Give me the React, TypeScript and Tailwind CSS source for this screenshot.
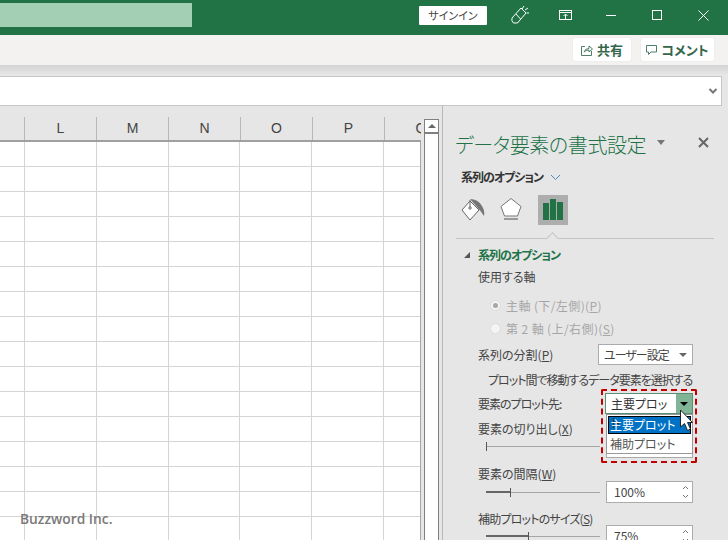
const font = "font-['Noto_Sans_CJK_JP','Liberation_Sans',sans-serif] [font-feature-settings:'palt']";

const columns = [
  { label: "", width: "w-[25px]" },
  { label: "L", width: "w-[72px]" },
  { label: "M", width: "w-[72px]" },
  { label: "N", width: "w-[72px]" },
  { label: "O", width: "w-[72px]" },
  { label: "P", width: "w-[72px]" },
  { label: "Q", width: "w-[36px]" },
];

const rows = Array.from({ length: 16 });

function TitleBar() {
  return (
    <div className="h-[35px] shrink-0 bg-[#217346] flex items-center">
      <div className="w-[192px] h-[24px] mb-[5px] bg-[#a3cfb5]" />
      <div className="flex-1" />
      <div className="w-[68px] h-[19px] mb-[5px] mr-[20px] bg-white rounded-[1px] flex items-center justify-center text-[11px] text-[#444]">
        サインイン
      </div>
      <svg width="24" height="24" viewBox="0 0 24 24" fill="none" stroke="white" strokeWidth="1" className="mb-[5px] mr-[26px]">
        <path d="M5 15 L14 5 L19 10 L10.5 20 L6.5 20 Q4 18 5 15 Z" />
        <path d="M9 11 L13.5 16" />
        <path d="M15 6 L17 3 M18 7 L21 5 M19.5 10 L22 10" />
      </svg>
      <svg width="16" height="14" viewBox="0 0 16 14" fill="none" stroke="white" strokeWidth="1" className="mb-[5px] mr-[33px]">
        <rect x="2.5" y="2.5" width="12" height="9" />
        <path d="M2.5 4.5 H14.5 M8.5 11 V6.5 M6.5 8 L8.5 6 L10.5 8" />
      </svg>
      <div className="w-[10px] h-px bg-white mb-[5px] mr-[36px]" />
      <div className="w-[10px] h-[10px] border border-white mb-[5px] mr-[36px]" />
      <svg width="11" height="11" viewBox="0 0 11 11" stroke="white" strokeWidth="1" className="mb-[5px] mr-[19px]">
        <path d="M0.5 0.5 L10.5 10.5 M10.5 0.5 L0.5 10.5" />
      </svg>
    </div>
  );
}

function RibbonStrip() {
  return (
    <div className="h-[30px] shrink-0 bg-[#f3f2f1] flex items-center justify-end gap-[10px] pr-[14px] pb-[1px]">
      <div className="w-[58px] h-[23px] bg-white rounded-[2px] shadow-[0_0_1px_#ccc] flex items-center justify-center gap-[4px] text-[13px] font-bold text-[#33664c]">
        <svg width="12" height="12" viewBox="0 0 12 12" fill="none" stroke="#4f7f68" strokeWidth="1">
          <path d="M4 2.5 H0.5 V11.5 H10.5 V7" />
          <path d="M3 8 Q4 4.5 8 4.5 V2 L11.5 5 L8 8 V6 Q5 6 3 8 Z" />
        </svg>
        共有
      </div>
      <div className="w-[73px] h-[23px] bg-white rounded-[2px] shadow-[0_0_1px_#ccc] flex items-center justify-center gap-[3px] text-[13px] font-bold text-[#33664c]">
        <svg width="12" height="12" viewBox="0 0 12 12" fill="none" stroke="#4f7f68" strokeWidth="1">
          <path d="M0.5 1.5 H10.5 V8 H5 L2.5 10.5 V8 H0.5 Z" />
        </svg>
        コメント
      </div>
    </div>
  );
}

function FormulaBar() {
  return (
    <div className="h-[41px] shrink-0 bg-[#e6e6e6] flex flex-col">
      <div className="h-[11px] bg-gradient-to-b from-[#d4d4d4] to-[#e8e8e8]" />
      <div className="h-[30px] mr-[6px] bg-white border-y border-r border-[#c6c6c6] flex items-center justify-end pr-[3px]">
        <svg width="10" height="7" viewBox="0 0 10 7" fill="none" stroke="#777" strokeWidth="2">
          <path d="M1.5 1 L5 4.5 L8.5 1" />
        </svg>
      </div>
    </div>
  );
}

function Sheet() {
  return (
    <div className="w-[421px] pt-[11px] shrink-0">
      <div className="h-[25px] flex border-b-2 border-[#a0a0a0]">
        {columns.map((c, i) => (
          <div
            key={i}
            className={`${c.width} overflow-hidden text-[14px] text-[#444] font-['Liberation_Sans',sans-serif] ${i < 6 ? "border-r border-[#b8b8b8]" : ""}`}
          >
            <div className={`h-full flex items-center justify-center ${i === 6 ? "w-[72px]" : "w-full"}`}>{c.label}</div>
          </div>
        ))}
      </div>
      <div className="bg-white border-r border-[#a6a6a6]">
        {rows.map((_, r) => (
          <div key={r} className="h-[25px] flex border-b border-[#d4d4d4]">
            {columns.map((c, i) => (
              <div key={i} className={`${c.width} ${i < 6 ? "border-r border-[#d4d4d4]" : ""}`} />
            ))}
          </div>
        ))}
      </div>
    </div>
  );
}

function Scrollbar() {
  return (
    <div className="w-[15px] ml-[3px] mt-[13px] shrink-0 bg-white border-x border-[#808080] flex flex-col">
      <div className="h-[15px] border-t border-b-2 border-[#808080] flex items-center justify-center">
        <div className="w-0 h-0 border-x-[4px] border-x-transparent border-b-[4px] border-b-[#666]" />
      </div>
    </div>
  );
}

function Label({ children, className = "" }: { children: React.ReactNode; className?: string }) {
  return <div className={`text-[12px] leading-none text-[#444] ${className}`}>{children}</div>;
}

function Slider({ fill }: { fill: number }) {
  return (
    <div className="w-[114px] h-[9px] shrink-0 relative flex items-center">
      <div className="w-full h-px bg-[#a6a6a6]" />
      <div className="absolute left-0 h-[2px] bg-[#666]" style={{ width: fill }} />
      <div className="absolute w-px h-[9px] bg-[#555]" style={{ left: fill }} />
    </div>
  );
}

function Spin({ value }: { value: string }) {
  return (
    <div className="w-[87px] h-[22px] ml-[6px] shrink-0 bg-white border border-[#ababab] flex items-center justify-between pl-[7px] pr-[3px] text-[12px] text-[#444]">
      {value}
      <svg width="7" height="14" viewBox="0 0 7 14" fill="none" stroke="#777" strokeWidth="1" className="ml-auto">
        <path d="M1 4 L3.5 1.5 L6 4 M1 10 L3.5 12.5 L6 10" />
      </svg>
    </div>
  );
}

function Radio({ checked, children }: { checked?: boolean; children: React.ReactNode }) {
  return (
    <div className="h-[23px] flex items-center gap-[5px] pl-[12px] text-[12px] tracking-[0.4px] text-[#a6a6a6]">
      <div className="w-[11px] h-[11px] rounded-full bg-[#f4f4f4] border border-[#dcdcdc] flex items-center justify-center">
        {checked && <div className="w-[5px] h-[5px] rounded-full bg-[#a6a6a6]" />}
      </div>
      <span>{children}</span>
    </div>
  );
}

function FormatPane() {
  return (
    <div className="flex-1 ml-[3px] border-l border-[#b8b8b8] pl-[13px] pr-[14px] pt-[24px] overflow-hidden">
      <div className="h-[30px] flex items-center relative">
        <span className="text-[20px] leading-none tracking-[-0.4px] ml-[-1px] text-[#217346] font-light whitespace-nowrap">データ要素の書式設定</span>
        <div className="ml-[11px] mb-[6px] w-0 h-0 border-x-[4px] border-x-transparent border-t-[5px] border-t-[#767676]" />
        <svg width="11" height="11" viewBox="0 0 11 11" stroke="#666" strokeWidth="2" className="ml-auto mb-[5px] mr-[5px]">
          <path d="M1 1 L10 10 M10 1 L1 10" />
        </svg>
      </div>
      <div className="h-[26px] mt-[4px] pl-[5px] flex items-center gap-[7px] text-[12px] tracking-[-1px] font-bold text-[#333]">
        系列のオプション
        <svg width="11" height="7" viewBox="0 0 11 7" fill="none" stroke="#4a8ac4" strokeWidth="1">
          <path d="M1 1 L5.5 5.5 L10 1" />
        </svg>
      </div>
      <div className="h-[30px] mt-[5px] flex items-center">
        <svg width="26" height="26" viewBox="0 0 26 26" className="ml-[4px]">
          <path d="M10 2 Q18 2 22 9 Q25 14 24 19 Q21 14 17 10 Z" fill="#767676" />
          <path d="M10 4 L19 13 L10 23 L2 13 Z" fill="white" stroke="#666" strokeWidth="1" />
          <path d="M10 3 V10" stroke="#666" strokeWidth="1" />
          <circle cx="10" cy="11" r="1.2" fill="none" stroke="#666" strokeWidth="1" />
        </svg>
        <svg width="24" height="26" viewBox="0 0 24 26" className="ml-[13px]">
          <path d="M12 1.5 L22 9.5 L18.5 19 H5.5 L2 9.5 Z" fill="white" stroke="#777" strokeWidth="1" />
          <path d="M5 22 H19" stroke="#999" strokeWidth="2" />
        </svg>
        <div className="w-[30px] h-[30px] ml-[15px] bg-[#adadad] flex items-end justify-center gap-px pb-[5px]">
          <div className="w-[6px] h-[17px] bg-[#217346]" />
          <div className="w-[6px] h-[21px] bg-[#217346]" />
          <div className="w-[6px] h-[18px] bg-[#217346]" />
        </div>
      </div>
      <div className="h-[14px] border-b border-[#c4c4c4] relative">
        <div className="absolute left-[92px] top-[9px] w-[9px] h-[9px] rotate-45 bg-[#e6e6e6] border-l border-t border-[#c4c4c4]" />
      </div>
      <div className="h-[31px] flex items-center gap-[8px] pl-[8px] text-[12px] tracking-[-1px] font-bold text-[#217346]">
        <div className="w-0 h-0 border-l-[6px] border-l-transparent border-b-[6px] border-b-[#555]" />
        系列のオプション
      </div>
      <Label className="ml-[22px] mt-[1px] h-[20px]">使用する軸</Label>
      <div className="ml-[22px] mt-[3px]">
        <Radio checked>
          主軸 (下/左側)(<u>P</u>)
        </Radio>
        <Radio>
          第 2 軸 (上/右側)(<u>S</u>)
        </Radio>
      </div>
      <div className="ml-[22px] mt-[4px] h-[21px] flex items-center">
        <Label className="w-[120px]">
          系列の分割(<u>P</u>)
        </Label>
        <div className="w-[95px] h-[21px] bg-white border border-[#ababab] flex items-center justify-between pl-[5px] pr-[5px] text-[12px] tracking-[-1px] text-[#444]">
          ユーザー設定
          <div className="w-0 h-0 border-x-[4px] border-x-transparent border-t-[4px] border-t-[#666]" />
        </div>
      </div>
      <Label className="ml-[32px] mt-[9px] whitespace-nowrap tracking-[-1px]">プロット間で移動するデータ要素を選択する</Label>
      <div className="ml-[22px] mt-[7px] h-[22px] flex items-center">
        <Label className="w-[127px] tracking-[-1px]">要素のプロット先:</Label>
      </div>
      <Label className="ml-[22px] mt-[8px]">
        要素の切り出し(<u>X</u>)
      </Label>
      <div className="ml-[30px] mt-[7px] h-[22px] flex items-start">
        <Slider fill={0} />
        <div className="mt-[-6px]">
          <Spin value="" />
        </div>
      </div>
      <Label className="ml-[22px] mt-[4px]">
        要素の間隔(<u>W</u>)
      </Label>
      <div className="ml-[30px] mt-[-1px] h-[26px] flex items-center">
        <Slider fill={24} />
        <Spin value="100%" />
      </div>
      <Label className="ml-[22px] mt-[8px] tracking-[-0.8px]">
        補助プロットのサイズ(<u>S</u>)
      </Label>
      <div className="ml-[30px] mt-[-2px] h-[26px] flex items-center">
        <Slider fill={42} />
        <Spin value="75%" />
      </div>
    </div>
  );
}

function PlotDropdown() {
  return (
    <div className="absolute left-[601px] top-[389px] w-[96px] h-[74px] border-2 border-dashed border-[#c00000] rounded-[2px]">
      <div className="ml-[2px] mt-[2px] w-[88px] h-[21px] flex bg-white border border-[#5b8f73]">
        <div className="flex-1 pl-[5px] text-[12px] leading-[19px] text-[#333]">主要プロット</div>
        <div className="w-[16px] bg-[#7fb596] flex items-center justify-center">
          <div className="w-0 h-0 border-x-[4px] border-x-transparent border-t-[4px] border-t-black" />
        </div>
      </div>
      <div className="ml-[3px] w-[87px] h-[40px] bg-white border border-[#999] p-px text-[12px] leading-none">
        <div className="h-[18px] bg-[#0072c6] border border-black text-white flex items-center pl-px">主要プロット</div>
        <div className="h-[20px] text-[#555] flex items-center pl-[2px]">補助プロット</div>
      </div>
      <svg width="16" height="24" viewBox="0 0 16 24" className="absolute left-[76px] top-[18px]">
        <path d="M1.5 1 V18 L5.5 14.5 L8.5 21.5 L11.5 20 L8.5 13.5 L13.5 13.5 Z" fill="white" stroke="#222" strokeWidth="1" />
      </svg>
    </div>
  );
}

export default function App() {
  return (
    <div className={`w-[728px] h-[540px] relative overflow-hidden flex flex-col bg-[#e6e6e6] ${font}`}>
      <TitleBar />
      <RibbonStrip />
      <FormulaBar />
      <div className="flex-1 flex min-h-0 overflow-hidden">
        <Sheet />
        <Scrollbar />
        <FormatPane />
      </div>
      <PlotDropdown />
      <div className="absolute left-[20px] top-[512px] text-[13.8px] leading-none font-semibold text-[#7a7a7a] font-['Open_Sans',sans-serif]">
        Buzzword Inc.
      </div>
    </div>
  );
}
